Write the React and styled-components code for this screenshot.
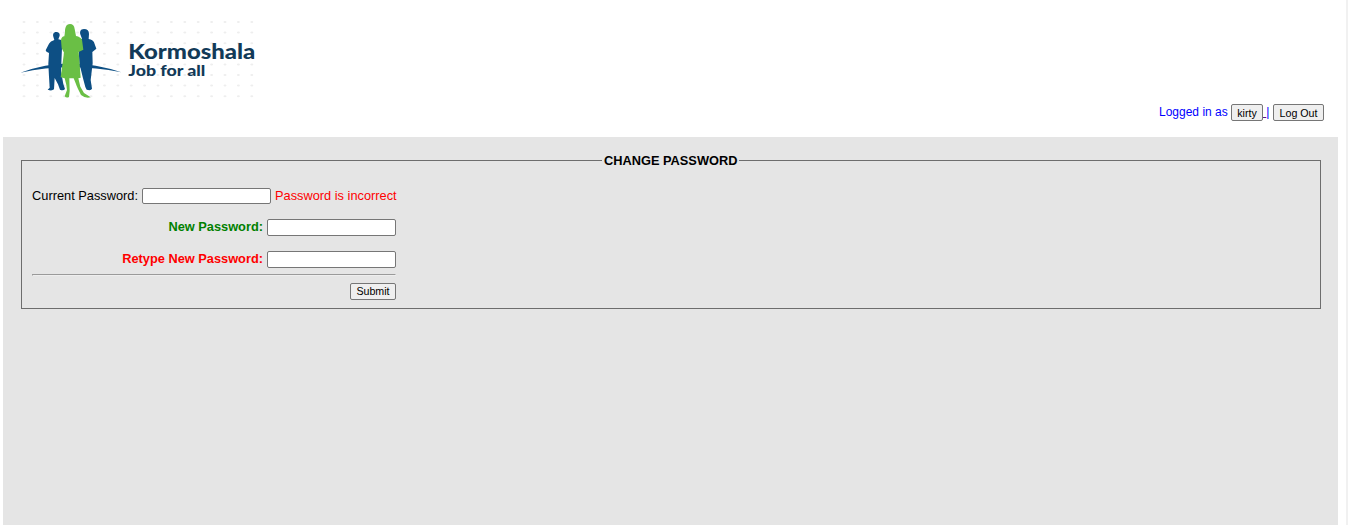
import React from 'react';
import styled, { createGlobalStyle } from 'styled-components';

const GlobalStyle = createGlobalStyle`
  * { box-sizing: border-box; }
  body { margin: 0; background: #fff; overflow: hidden; }
  body, input, button { font-family: "Liberation Sans", Arial, sans-serif; }
`;

const Page = styled.div`
  height: 525px;
  padding: 0 8px 0 3px;
  border-right: 2px solid #f1f1f1;
  display: flex;
  flex-direction: column;
`;

const Header = styled.header`
  height: 137px;
  padding: 20px 14px 0 17px;
  display: flex;
  flex-direction: column;
`;

const LogoImage = styled.svg`
  display: block;
  width: 240px;
  height: 80px;
`;

const Account = styled.div`
  display: flex;
  align-self: flex-end;
  align-items: flex-start;
  height: 17px;
  margin-top: 4px;
  font-size: 12px;
  line-height: 17px;
  color: #00f;
`;

const Greeting = styled.span`
  width: 68px;
  margin-right: 4px;
  white-space: nowrap;
`;

const Separator = styled.span`
  display: flex;
  width: 10px;
  white-space: pre;
`;

const VisitedGap = styled.span`
  color: #551a8b;
  text-decoration: underline;
`;

const Button = styled.button`
  width: ${(p) => p.$width}px;
  height: 17px;
  padding: ${(p) => (p.$raised ? '0 0 1px' : '1px 0 0')};
  border: 1px solid #767676;
  border-radius: 2px;
  background: #efefef;
  color: #000;
  font-size: 10.67px;
  line-height: 14px;
  white-space: nowrap;
`;

const Main = styled.main`
  flex: 1;
  padding: 15px 17px 0 18px;
  background: #e5e5e5;
`;

const Fieldset = styled.fieldset`
  height: 157px;
  margin: 0;
  padding: 19px 11px 0 10px;
  border: 1px solid #6d6d6d;
`;

const Legend = styled.legend`
  width: 137px;
  height: 17px;
  margin: 0 auto;
  padding: 0 2px;
  font-size: 12.8px;
  font-weight: bold;
  line-height: 17px;
  white-space: nowrap;
`;

const Form = styled.form`
  width: 364px;
`;

const Row = styled.div`
  display: flex;
  justify-content: flex-end;
  height: 17px;
  margin-bottom: ${(p) => p.$gap}px;
  font-size: 12.8px;
  line-height: 16px;
`;

const Label = styled.label`
  margin-right: 4px;
  color: ${(p) => p.$color || '#000'};
  font-weight: ${(p) => (p.$bold ? 'bold' : 'normal')};
  white-space: nowrap;
`;

const Field = styled.input`
  flex: none;
  width: 129px;
  height: ${(p) => p.$height || 17}px;
  padding: 1px 2px;
  border: 1px solid #767676;
  border-radius: 2px;
  background: #fff;
  outline: none;
`;

const ErrorText = styled.span`
  width: 121px;
  margin-left: 4px;
  color: #f00;
  white-space: nowrap;
`;

const Divider = styled.hr`
  height: 2px;
  margin: 0 0 7px;
  border: 1px solid;
  border-color: #9a9a9a #eee #eee #9a9a9a;
`;

const dotColumns = Array.from({ length: 18 }, (_, i) => 42 + i * 40.2);
const dotRows = Array.from({ length: 8 }, (_, i) => 36 + i * 31.8);

function Logo() {
  return (
    <LogoImage viewBox="30 30 720 240" role="img" aria-label="Kormoshala Job for all">
      <g fill="#eeeeee">
        {dotRows.map((y) =>
          dotColumns.map((x) => <ellipse key={`${x}-${y}`} cx={x} cy={y} rx="4.5" ry="3" />)
        )}
      </g>
      <g fill="#0d4f84">
        <path d="M31 188Q178 133 334 187Q178 156 31 188Z" />
        <path d="M139 66C130 66 128 73 130 80L133 90Q121 94 117 101L107 121Q107 126 117 129L115 161L117 200L119 233L113 239Q125 244 132 238L134 204L144 223L150 239Q160 243 165 237L160 222L153 184L157 91L145 88L149 77C150 70 146 66 139 66Z" />
        <path d="M222 57C211 57 208 66 212 76L216 86L205 92L208 160L219 205L226 231L230 239Q243 243 246 236L242 210L248 160L247 126L259 116L252 97Q249 90 236 87L237 72C237 62 232 57 222 57Z" />
      </g>
      <path
        fill="#6abf45"
        d="M180 42C167 42 165 55 165 67L163 79Q154 80 153 91L155 115L162 128L159 150L152 202L164 205L169 225L171 240L164 259Q169 265 177 261L179 243L178 205H191L203 235L213 255Q226 266 242 262L222 249L211 230L205 205L212 203L208 150L206 126L220 119L216 89Q212 81 198 78L194 57C193 47 188 42 180 42Z"
      />
      <g fill="#123a58" fontFamily="Lato, sans-serif" fontWeight="900">
        <text x="355" y="147" fontSize="63" textLength="381" lengthAdjust="spacingAndGlyphs">Kormoshala</text>
        <text x="355" y="198" fontSize="43" textLength="231" lengthAdjust="spacingAndGlyphs">Job for all</text>
      </g>
    </LogoImage>
  );
}

export default function App() {
  return (
    <>
      <GlobalStyle />
      <Page>
        <Header>
          <Logo />
          <Account>
            <Greeting>Logged in as</Greeting>
            <Button $width={32}>kirty</Button>
            <Separator><VisitedGap> </VisitedGap>|</Separator>
            <Button $width={51}>Log Out</Button>
          </Account>
        </Header>
        <Main>
          <Fieldset>
            <Legend>CHANGE PASSWORD</Legend>
            <Form onSubmit={(e) => e.preventDefault()}>
              <Row $gap={14}>
                <Label htmlFor="current">Current Password:</Label>
                <Field id="current" type="password" $height={16} />
                <ErrorText>Password is incorrect</ErrorText>
              </Row>
              <Row $gap={15}>
                <Label htmlFor="new" $color="#008000" $bold>New Password:</Label>
                <Field id="new" type="password" />
              </Row>
              <Row $gap={6}>
                <Label htmlFor="retype" $color="#f00" $bold>Retype New Password:</Label>
                <Field id="retype" type="password" />
              </Row>
              <Divider />
              <Row $gap={0}>
                <Button $width={46} $raised>Submit</Button>
              </Row>
            </Form>
          </Fieldset>
        </Main>
      </Page>
    </>
  );
}
